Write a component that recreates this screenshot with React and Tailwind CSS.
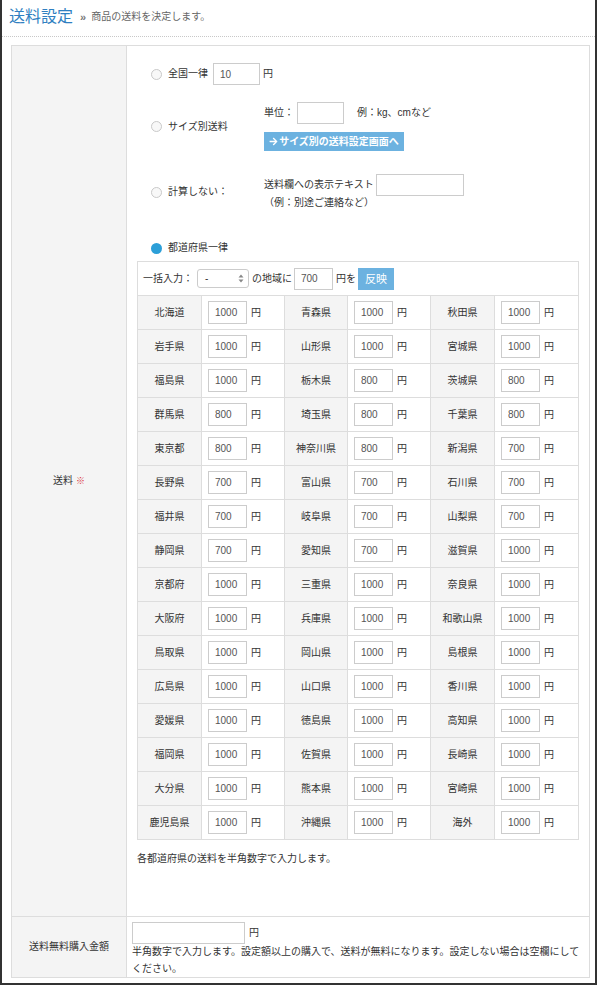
import { FaArrowRight } from 'react-icons/fa';

const prefs = [
    ['北海道', '1000', '青森県', '1000', '秋田県', '1000'],
    ['岩手県', '1000', '山形県', '1000', '宮城県', '1000'],
    ['福島県', '1000', '栃木県', '800', '茨城県', '800'],
    ['群馬県', '800', '埼玉県', '800', '千葉県', '800'],
    ['東京都', '800', '神奈川県', '800', '新潟県', '700'],
    ['長野県', '700', '富山県', '700', '石川県', '700'],
    ['福井県', '700', '岐阜県', '700', '山梨県', '700'],
    ['静岡県', '700', '愛知県', '700', '滋賀県', '1000'],
    ['京都府', '1000', '三重県', '1000', '奈良県', '1000'],
    ['大阪府', '1000', '兵庫県', '1000', '和歌山県', '1000'],
    ['鳥取県', '1000', '岡山県', '1000', '島根県', '1000'],
    ['広島県', '1000', '山口県', '1000', '香川県', '1000'],
    ['愛媛県', '1000', '徳島県', '1000', '高知県', '1000'],
    ['福岡県', '1000', '佐賀県', '1000', '長崎県', '1000'],
    ['大分県', '1000', '熊本県', '1000', '宮崎県', '1000'],
    ['鹿児島県', '1000', '沖縄県', '1000', '海外', '1000'],
];

const Radio = ({ checked }) =>
    checked ? (
        <span className="inline-block w-[11px] h-[11px] rounded-full bg-[#2c9fd8] shrink-0" />
    ) : (
        <span className="inline-block w-[11px] h-[11px] rounded-full border border-[#c9c9c9] bg-[#f8f8f8] shrink-0" />
    );

const TextInput = ({ value = '', className = '' }) => (
    <input
        type="text"
        defaultValue={value}
        className={`border border-[#cccccc] bg-white text-[10px] text-[#555] pl-[6px] outline-none ${className}`}
    />
);

const App = () => {
    return (
        <div
            className="w-[597px] h-[985px] bg-white border-l-2 border-r-2 border-b-2 border-[#333] text-[#333] text-[10px] leading-[14px]"
            style={{ fontFamily: '"Liberation Sans", "Noto Sans CJK JP", sans-serif' }}
        >
            {/* header */}
            <div className="h-[37px] border-b border-dotted border-[#c8c8c8] flex items-center pl-[7px] pb-[3px]">
                <h1 className="text-[16px] leading-[20px] text-[#2f7fc1]">送料設定</h1>
                <span className="ml-[7px] text-[#777] text-[11px] font-bold">»</span>
                <span className="ml-[5px] text-[#666] text-[10px]">商品の送料を決定します。</span>
            </div>

            <div className="ml-[9px] mt-[8px] w-[579px] border border-[#dddddd]">
                {/* 送料 row */}
                <div className="flex">
                    <div className="w-[115px] shrink-0 bg-[#f4f4f4] border-r border-[#dddddd] flex items-center justify-center">
                        送料<span className="ml-[3px] text-[#d9343a] text-[9px]">※</span>
                    </div>
                    <div className="flex-1 p-[10px]">
                        <div className="pl-[14px]">
                            <div className="mt-[7px] flex items-center h-[22px]">
                                <Radio />
                                <span className="ml-[6px]">全国一律</span>
                                <TextInput value="10" className="ml-[5px] w-[47px] h-[22px]" />
                                <span className="ml-[3px]">円</span>
                            </div>

                            <div className="mt-[17px] flex items-center">
                                <div className="w-[113px] flex items-center">
                                    <Radio />
                                    <span className="ml-[6px]">サイズ別送料</span>
                                </div>
                                <div className="flex flex-col items-start">
                                    <div className="flex items-center h-[22px]">
                                        <span>単位：</span>
                                        <TextInput className="ml-[3px] w-[47px] h-[22px]" />
                                        <span className="ml-[13px]">例：kg、cmなど</span>
                                    </div>
                                    <button className="mt-[8px] h-[19px] w-[140px] bg-[#6cb2e0] text-white font-bold text-[10px] flex items-center justify-center gap-[1px]">
                                        <FaArrowRight className="w-[9px] h-[9px]" />
                                        サイズ別の送料設定画面へ
                                    </button>
                                </div>
                            </div>

                            <div className="mt-[23px] flex items-center">
                                <div className="w-[113px] flex items-center">
                                    <Radio />
                                    <span className="ml-[6px]">計算しない：</span>
                                </div>
                                <div className="flex flex-col items-start">
                                    <div className="flex items-center h-[22px]">
                                        <span>送料欄への表示テキスト</span>
                                        <TextInput className="ml-[2px] w-[88px] h-[22px]" />
                                    </div>
                                    <span className="leading-[14px]">（例：別途ご連絡など）</span>
                                </div>
                            </div>

                            <div className="mt-[31px] flex items-center h-[14px]">
                                <Radio checked />
                                <span className="ml-[6px]">都道府県一律</span>
                            </div>
                        </div>

                        {/* prefecture table */}
                        <div className="mt-[6px] w-[442px] border-l border-t border-[#dddddd]">
                            <div className="h-[34px] border-r border-b border-[#dddddd] flex items-center pl-[5px]">
                                <span>一括入力：</span>
                                <div className="ml-[4px] w-[52px] h-[19px] border border-[#cccccc] rounded-[3px] flex items-center justify-between pl-[7px] pr-[4px]">
                                    <span>-</span>
                                    <svg width="6" height="9" viewBox="0 0 6 9" fill="#888">
                                        <path d="M3 0.5 L5.5 3.5 H0.5 Z" />
                                        <path d="M3 8.5 L5.5 5.5 H0.5 Z" />
                                    </svg>
                                </div>
                                <span className="ml-[3px]">の地域に</span>
                                <TextInput value="700" className="ml-[2px] w-[39px] h-[22px]" />
                                <span className="ml-[3px]">円を</span>
                                <button className="ml-[2px] w-[36px] h-[22px] bg-[#6cb2e0] text-white text-[11px]">反映</button>
                            </div>
                            <div className="grid grid-cols-[64px_83px_63px_83px_64px_84px]">
                                {prefs.map((row, i) =>
                                    [0, 2, 4].map(j => [
                                        <div
                                            key={`l${i}-${j}`}
                                            className="h-[34px] bg-[#f4f4f4] border-r border-b border-[#dddddd] flex items-center justify-center"
                                        >
                                            {row[j]}
                                        </div>,
                                        <div
                                            key={`v${i}-${j}`}
                                            className="h-[34px] border-r border-b border-[#dddddd] flex items-center pl-[6px]"
                                        >
                                            <TextInput value={row[j + 1]} className="w-[39px] h-[23px]" />
                                            <span className="ml-[4px]">円</span>
                                        </div>,
                                    ])
                                )}
                            </div>
                        </div>
                        <p className="mt-[12px] mb-[40px]">各都道府県の送料を半角数字で入力します。</p>
                    </div>
                </div>

                {/* 送料無料購入金額 row */}
                <div className="flex border-t border-[#dddddd]">
                    <div className="w-[115px] shrink-0 bg-[#f4f4f4] border-r border-[#dddddd] flex items-center justify-center">
                        送料無料購入金額
                    </div>
                    <div className="flex-1 pt-[5px] pl-[5px] pr-[4px]">
                        <div className="flex items-center h-[22px]">
                            <TextInput className="w-[113px] h-[22px]" />
                            <span className="ml-[4px]">円</span>
                        </div>
                        <p className="leading-[17px] -mt-[1px]">
                            半角数字で入力します。設定額以上の購入で、送料が無料になります。設定しない場合は空欄にしてください。
                        </p>
                    </div>
                </div>
            </div>
        </div>
    );
};

export default App;
